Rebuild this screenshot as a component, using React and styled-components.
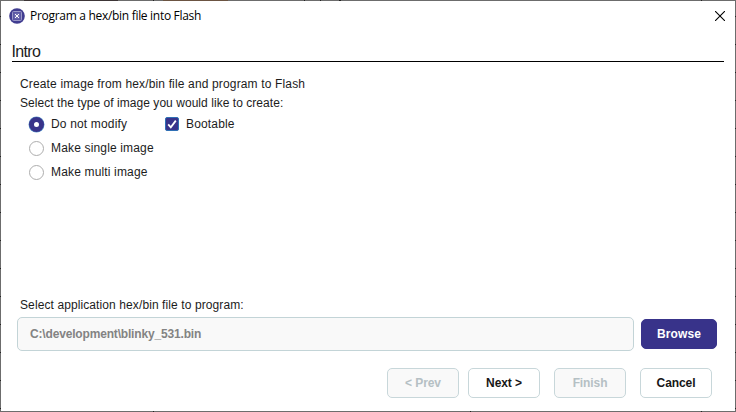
import React from "react";
import styled, { createGlobalStyle } from "styled-components";

const Global = createGlobalStyle`
  * { box-sizing: border-box; }
  body { margin: 0; background: #6c6c6c; overflow: hidden; }
`;

const Backdrop = styled.div`
  width: 736px;
  height: 412px;
  padding: 1px;
  background:
    linear-gradient(90deg, transparent 24px, #3c3536 24px 118px, transparent 118px 153px, #222 153px 154px, transparent 154px 163px, #6b5442 163px 228px, transparent 228px 304px, #222 304px 305px, transparent 305px 320px, #222 320px 321px, transparent 321px 339px, #222 339px 341px, transparent 341px 701px, #222 701px 702px, transparent 702px) 0 0 / 736px 1px no-repeat,
    linear-gradient(90deg, #6c6c6c 153px, #222 153px 154px, #6c6c6c 154px 470px, #222 470px 471px, #6c6c6c 471px 701px, #222 701px 702px, #6c6c6c 702px) 0 411px / 736px 1px no-repeat,
    repeating-linear-gradient(#6c6c6c 0 16px, #222 16px 17px, #6c6c6c 17px 28px);
`;

const Dialog = styled.main`
  display: flex;
  flex-direction: column;
  width: 734px;
  height: 410px;
  background: #fff;
  color: #1c1c1c;
  font: 12px/16px "Liberation Sans", Arial, sans-serif;
`;

const TitleBar = styled.header`
  display: flex;
  align-items: center;
  height: 29px;
  padding: 0 10px 0 8px;
`;

const Title = styled.div`
  flex: 1;
  margin-left: 5px;
  color: #000;
  font: 12px/16px "Open Sans", "Noto Sans", sans-serif;
  letter-spacing: -0.3px;
`;

const CloseButton = styled.button`
  display: flex;
  padding: 0;
  border: 0;
  background: none;
`;

const Heading = styled.h1`
  height: 32px;
  margin: 0 11px;
  padding-top: 12px;
  border-bottom: 1px solid #000;
  font-size: 16px;
  font-weight: 400;
  line-height: 20px;
  letter-spacing: -0.65px;
  text-indent: -0.5px;
`;

const Content = styled.section`
  flex: 1;
  padding: 13px 19px 0;
`;

const Line = styled.p`
  margin: 0;
  height: 19px;
  line-height: 19px;
  letter-spacing: ${(p) => p.$spacing}px;
`;

const Options = styled.div`
  display: grid;
  grid-template-columns: 136px 1fr;
  grid-auto-rows: 24px;
  margin-top: -1px;
  padding-left: 9px;
  letter-spacing: 0.16px;
`;

const Option = styled.label`
  display: flex;
  align-items: center;
  gap: 7px;
  grid-column: ${(p) => p.$column || 1};
`;

const Radio = styled.span`
  width: 15px;
  height: 15px;
  border-radius: 50%;
  border: ${(p) => (p.$checked ? "5px solid #38338a" : "1px solid #adadad")};
  box-shadow: ${(p) => (p.$checked ? "0 0 0 0.5px #5d9bd0" : "none")};
  background: #fff;
`;

const Checkbox = styled.span`
  display: flex;
  width: 14px;
  height: 14px;
  border: 1px solid #2f70b5;
  border-radius: 2px;
  background: #38338a;
`;

const FileLabel = styled.div`
  height: 20px;
  padding-left: 19px;
  letter-spacing: 0.1px;
`;

const FileRow = styled.div`
  display: flex;
  align-items: center;
  gap: 7px;
  padding: 0 18px 0 16px;
`;

const FileField = styled.div`
  flex: 1;
  height: 34px;
  padding-left: 12px;
  border: 1px solid #c3d4d7;
  border-radius: 5px;
  background: #f9f9f9;
  color: #838383;
  font-weight: 700;
  line-height: 32px;
  letter-spacing: -0.17px;
`;

const Button = styled.button`
  width: ${(p) => (p.$primary ? 76 : 72)}px;
  height: 30px;
  padding: 0;
  border: 1px solid ${(p) => (p.$primary ? "#38338a" : "#c8d7da")};
  border-radius: 5px;
  background: ${(p) => (p.$primary ? "#38338a" : p.disabled ? "#f9f9f9" : "#fff")};
  color: ${(p) => (p.$primary ? "#fff" : p.disabled ? "#b5c0c4" : "#171717")};
  font: 700 12px/28px "Liberation Sans", Arial, sans-serif;
  letter-spacing: ${(p) => (p.$primary ? 0.1 : -0.1)}px;
`;

const Footer = styled.footer`
  display: flex;
  justify-content: flex-end;
  gap: 14px;
  height: 60px;
  padding: 17px 23px 0 0;
`;

const ButtonPair = styled.div`
  display: flex;
  gap: ${(p) => p.$gap}px;
`;

const AppIcon = () => (
  <svg width="16" height="16" viewBox="0 0 16 16">
    <circle cx="8" cy="8" r="7.8" fill="#403c90" />
    <rect x="3.5" y="3.5" width="9" height="9" rx="1" fill="#5b58a4" stroke="#9a98c8" strokeWidth="1" />
    <rect x="5.5" y="5.5" width="5" height="5" fill="#7774b3" />
    <path d="M6 6l4 4M10 6l-4 4" stroke="#fff" strokeWidth="1" />
  </svg>
);

export default function App() {
  return (
    <>
      <Global />
      <Backdrop>
        <Dialog>
          <TitleBar>
            <AppIcon />
            <Title>Program a hex/bin file into Flash</Title>
            <CloseButton aria-label="Close">
              <svg width="10" height="10" viewBox="0 0 10 10">
                <path d="M0 0l10 10M10 0L0 10" stroke="#000" strokeWidth="1.1" />
              </svg>
            </CloseButton>
          </TitleBar>
          <Heading>Intro</Heading>
          <Content>
            <Line $spacing={0.15}>Create image from hex/bin file and program to Flash</Line>
            <Line $spacing={0.05}>Select the type of image you would like to create:</Line>
            <Options>
              <Option><Radio $checked />Do not modify</Option>
              <Option $column={2}>
                <Checkbox>
                  <svg width="12" height="12" viewBox="0 0 12 12">
                    <path d="M2.2 6.3l2.6 3L9.8 2.6" fill="none" stroke="#fff" strokeWidth="1.8" />
                  </svg>
                </Checkbox>
                Bootable
              </Option>
              <Option><Radio />Make single image</Option>
              <Option><Radio />Make multi image</Option>
            </Options>
          </Content>
          <FileLabel>Select application hex/bin file to program:</FileLabel>
          <FileRow>
            <FileField>C:\development\blinky_531.bin</FileField>
            <Button $primary>Browse</Button>
          </FileRow>
          <Footer>
            <ButtonPair $gap={9}>
              <Button disabled>&lt; Prev</Button>
              <Button>Next &gt;</Button>
            </ButtonPair>
            <ButtonPair $gap={14}>
              <Button disabled>Finish</Button>
              <Button>Cancel</Button>
            </ButtonPair>
          </Footer>
        </Dialog>
      </Backdrop>
    </>
  );
}
